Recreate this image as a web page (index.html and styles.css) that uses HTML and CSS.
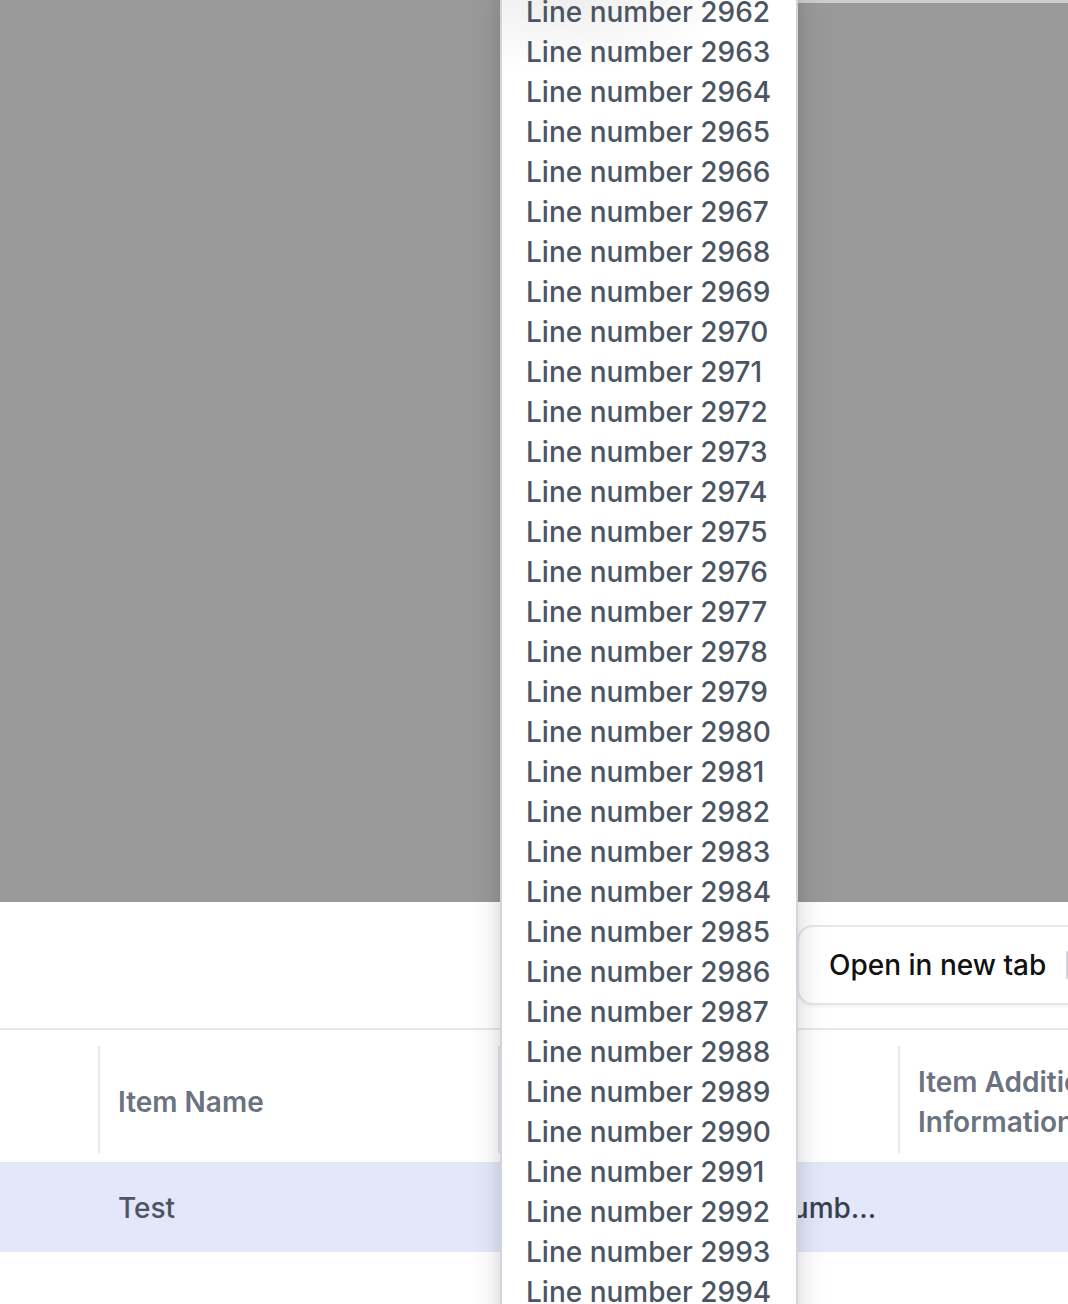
FILE: index.html
```html
<!DOCTYPE html>
<html lang="en">
<head>
<meta charset="utf-8">
<title>Items</title>
<link rel="stylesheet" href="styles.css">
</head>
<body>
<div class="page">
  <div class="backdrop"></div>
  <div class="toolbar">
    <div class="actions">
      <button class="split-btn" type="button">
        <span class="label">Open in new tab</span>
        <span class="sep"></span>
        <span class="caret">▾</span>
      </button>
    </div>
  </div>
  <div class="table">
    <div class="row head">
      <div class="cell"></div>
      <div class="cell th">Item Name</div>
      <div class="cell th">Item Description</div>
      <div class="cell th">Item Additional Information</div>
    </div>
    <div class="row body selected">
      <div class="cell"></div>
      <div class="cell td">Test</div>
      <div class="cell td trunc">Line number 1 Line number 2 Line number 3</div>
      <div class="cell td"></div>
    </div>
  </div>
  <div class="top-edge"></div>
  <div class="popover">
    <ul class="lines">
      <li>Line number 2962</li>
      <li>Line number 2963</li>
      <li>Line number 2964</li>
      <li>Line number 2965</li>
      <li>Line number 2966</li>
      <li>Line number 2967</li>
      <li>Line number 2968</li>
      <li>Line number 2969</li>
      <li>Line number 2970</li>
      <li>Line number 2971</li>
      <li>Line number 2972</li>
      <li>Line number 2973</li>
      <li>Line number 2974</li>
      <li>Line number 2975</li>
      <li>Line number 2976</li>
      <li>Line number 2977</li>
      <li>Line number 2978</li>
      <li>Line number 2979</li>
      <li>Line number 2980</li>
      <li>Line number 2981</li>
      <li>Line number 2982</li>
      <li>Line number 2983</li>
      <li>Line number 2984</li>
      <li>Line number 2985</li>
      <li>Line number 2986</li>
      <li>Line number 2987</li>
      <li>Line number 2988</li>
      <li>Line number 2989</li>
      <li>Line number 2990</li>
      <li>Line number 2991</li>
      <li>Line number 2992</li>
      <li>Line number 2993</li>
      <li>Line number 2994</li>
      <li>Line number 2995</li>
    </ul>
  </div>
</div>
</body>
</html>
```

FILE: styles.css
```css
html, body {
  margin: 0;
  padding: 0;
  width: 1068px;
  height: 1304px;
  overflow: hidden;
  background: #ffffff;
}

body {
  font-family: "Inter", "Noto Sans", sans-serif;
  font-size: 28px;
  line-height: 40px;
  color: #4b5563;
}

.page {
  position: relative;
  width: 1298px;
  height: 1304px;
}

.backdrop {
  height: 902px;
  background: #999999;
}

.toolbar {
  height: 126px;
  display: flex;
  align-items: center;
  border-bottom: 2px solid #e5e7eb;
}

.actions {
  margin-left: 797px;
  display: flex;
  align-items: center;
}

.split-btn {
  box-sizing: border-box;
  height: 80px;
  display: flex;
  align-items: center;
  gap: 20px;
  padding: 0 24px 0 30px;
  border: 2px solid #e5e7eb;
  border-radius: 16px;
  background: #ffffff;
  box-shadow: 0 2px 3px rgba(0, 0, 0, 0.05);
  font-family: "Inter", "Noto Sans", sans-serif;
  font-size: 28px;
  font-weight: 500;
  line-height: 40px;
  color: #111111;
  white-space: nowrap;
}

.sep {
  width: 2px;
  height: 28px;
  background: #d1d5db;
}

.caret {
  color: #6b7280;
}

.table {
  width: 1298px;
}

.row {
  display: grid;
  grid-template-columns: 98px 400px 400px 400px;
}

.row.head {
  border-bottom: 2px solid #e5e7eb;
}

.row.selected {
  background: #e4e6fa;
}

.cell {
  min-width: 0;
}

.th {
  position: relative;
  display: flex;
  align-items: center;
  padding: 32px 16px 20px 20px;
  font-weight: 600;
  color: #6b7280;
}

.th::before {
  content: "";
  position: absolute;
  left: 0;
  top: 16px;
  bottom: 9px;
  width: 2px;
  background: #e5e7eb;
}

.td {
  padding: 24px 16px 24px 20px;
  font-weight: 500;
  color: #4b5563;
  height: 40px;
}

.trunc {
  white-space: nowrap;
  overflow: hidden;
  text-overflow: ellipsis;
  color: #374151;
}

.top-edge {
  position: absolute;
  top: 0;
  left: 798px;
  right: 0;
  height: 3px;
  background: #cdcdcd;
}

.popover {
  position: absolute;
  left: 500px;
  top: -16px;
  width: 298px;
  height: 1360px;
  box-sizing: border-box;
  padding: 8px 24px;
  border-left: 2px solid #d0d4dc;
  border-right: 2px solid #d0d4dc;
  background:
    radial-gradient(ellipse 180px 90px at 20% 0, rgba(0, 0, 0, 0.08), rgba(0, 0, 0, 0) 100%),
    #ffffff;
  box-shadow: 0 10px 30px rgba(0, 0, 0, 0.14), 0 0 14px rgba(0, 0, 0, 0.06);
  overflow: hidden;
}

.lines {
  list-style: none;
  margin: 0;
  padding: 0;
}

.lines li {
  font-weight: 500;
  font-size: 28px;
  line-height: 40px;
  color: #4b5563;
  white-space: nowrap;
}
```
